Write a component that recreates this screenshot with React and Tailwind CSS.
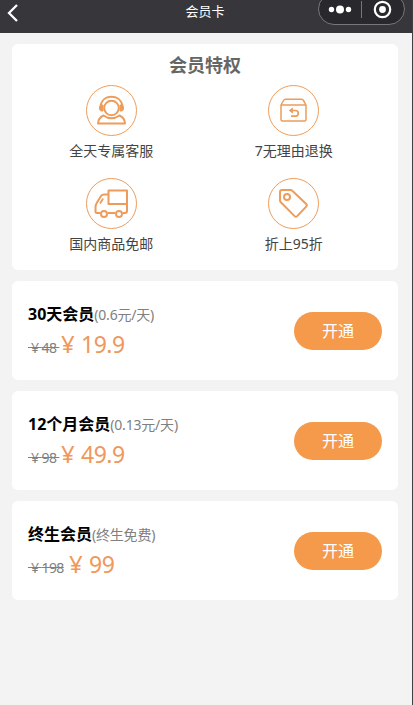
import React from 'react';

const plans = [
  { id: 1, name: '30天会员', note: '(0.6元/天)', oldPrice: '48 ', price: '19.9', oldWidth: 'w-8' },
  { id: 2, name: '12个月会员', note: '(0.13元/天)', oldPrice: '98 ', price: '49.9', oldWidth: 'w-8' },
  { id: 3, name: '终生会员', note: '(终生免费)', oldPrice: '198', price: '99', oldWidth: 'w-[36.5px]', gap: 'mr-[3.5px]' },
];

function ServiceIcon() {
  return (
    <>
      <circle cx="25.5" cy="23" r="7.3" strokeWidth="2" />
      <path d="M14.5 22C15 15.5 19.5 11.8 25.5 11.8s10.5 3.7 11 10.2" strokeWidth="2" />
      <path d="M17 20v6h-1.5c-1.5 0-2-1.3-2-3s.8-3 3.5-3zM34 20v6h1.5c1.5 0 2-1.3 2-3s-.8-3-3.5-3z" fill="currentColor" strokeWidth="1" />
      <path d="M17.5 30.5c-3.5 1.5-5.3 4.2-5.5 8h27c-.2-3.8-2-6.5-5.5-8-5 3.5-11 3.5-16 0z" strokeWidth="2" />
    </>
  );
}

function ReturnIcon() {
  return (
    <>
      <path d="M13 20h25v14.5a1.5 1.5 0 0 1-1.5 1.5h-22a1.5 1.5 0 0 1-1.5-1.5zM13 20l2.500-4.500q.7-1.200 2-1.200h16q1.300 0 2 1.200l2.500 4.500" strokeWidth="1.5" />
      <path d="M22.5 25.5h5a2.8 2.8 0 0 1 0 5.6h-4.5" strokeWidth="1.7" />
      <path d="M24.5 23l-3.2 2.5 3.2 2.5z" fill="currentColor" strokeWidth="0.8" />
    </>
  );
}

function TruckIcon() {
  return (
    <>
      <path d="M22.5 12.5h18.500v13.500h-18.500z" strokeWidth="2" />
      <path d="M22.5 16.5h-4.500q-2 0-3 1.500l-4 6.500q-1.500 2.500-1.500 4.500v4.500q0 1.500 1.500 1.500h3.500M21.5 35h8M36.5 35h2.500q2 0 2-2v-7" strokeWidth="2" />
      <path d="M17.2 20.5l-3.2 5" strokeWidth="1.8" />
      <circle cx="18" cy="36" r="3" strokeWidth="1.9" />
      <circle cx="33" cy="36" r="3" strokeWidth="1.9" />
    </>
  );
}

function TagIcon() {
  return (
    <>
      <path d="M14 12h8.5q1 0 1.8.7l13.900 13.300q1.300 1.300 0 2.600l-9 9.500q-1.300 1.300-2.600 0L12.8 24.3q-.8-.8-.8-1.8V14q0-2 2-2z" strokeWidth="2" />
      <circle cx="19" cy="19" r="3" strokeWidth="2" />
    </>
  );
}

const privileges = [
  { label: '全天专属客服', Icon: ServiceIcon },
  { label: '7无理由退换', Icon: ReturnIcon },
  { label: '国内商品免邮', Icon: TruckIcon },
  { label: '折上95折', Icon: TagIcon },
];

function Header() {
  return (
    <header className="flex h-[33px] items-start justify-between overflow-hidden bg-[#37363b] text-white">
      <div className="w-[94px]">
        <svg className="mt-1 ml-[7px] h-[18px] w-3" viewBox="0 0 12 18" fill="none" stroke="currentColor" strokeWidth="2.3">
          <path d="M10 1L2 9l8 8" />
        </svg>
      </div>
      <h1 className="mr-0.5 text-[13px] leading-[22px]">会员卡</h1>
      {/* mini program capsule */}
      <div className="-mt-[7px] mr-[7px] flex h-8 w-[87px] items-center rounded-full border border-[#77767a] bg-[#29282d]">
        <svg className="h-full w-full" viewBox="0 0 85 30" fill="currentColor">
          <circle cx="12.5" cy="15.5" r="2.7" />
          <circle cx="21" cy="15.5" r="4" />
          <circle cx="29.5" cy="15.5" r="2.7" />
          <path d="M42.5 7v17" stroke="#77767a" />
          <circle cx="63.5" cy="15.5" r="7.7" fill="none" stroke="currentColor" strokeWidth="2.2" />
          <circle cx="63.5" cy="15.5" r="3.4" />
        </svg>
      </div>
    </header>
  );
}

function PlanCard({ plan }) {
  return (
    <section className="flex h-[99px] items-center justify-between rounded-md bg-white px-4">
      <div className="-mt-0.5 whitespace-nowrap">
        <div className="flex h-[30px] items-baseline leading-[30px]">
          <span className="text-base font-bold text-black">{plan.name}</span>
          <span className="text-sm leading-[30px] tracking-[-0.2px] text-[#808080]">{plan.note}</span>
        </div>
        <div className="-mt-px flex h-[30px] items-baseline leading-[30px]">
          <span
            className={`text-sm leading-[30px] tracking-[-0.6px] whitespace-pre text-[#808080] line-through ${plan.oldWidth} ${plan.gap || ''}`}
          >
            {' ¥ '}
            {plan.oldPrice}
          </span>
          <span className="flex text-[23px] leading-[30px] tracking-[-0.5px] text-[#f0975a]">
            <span className="w-[21px] shrink-0 pl-px text-2xl leading-[30px]">¥</span>
            <span>{plan.price}</span>
          </span>
        </div>
      </div>
      <button className="h-[38px] w-[88px] rounded-full bg-[#f5994a] text-base text-white">开通</button>
    </section>
  );
}

export default function App() {
  return (
    <div className="h-[705px] w-[413px] border-r border-[#414045] bg-[#f3f3f3] font-['Noto_Sans','Noto_Sans_CJK_SC',sans-serif]">
      <Header />
      <main className="flex flex-col gap-[11px] pt-[11px] pr-3.5 pl-3">
        <section className="h-[226px] rounded-md bg-white pt-2">
          <h2 className="text-center text-lg leading-[26px] font-bold text-[#666]">会员特权</h2>
          <div className="mt-[7px] grid grid-cols-2 gap-y-[18px] pr-[13px] pl-2">
            {privileges.map(({ label, Icon }) => (
              <div key={label} className="flex h-[75px] flex-col items-center">
                <svg
                  className="h-[51px] w-[51px] shrink-0 text-[#ed9c5b]"
                  viewBox="0 0 51 51"
                  fill="none"
                  stroke="currentColor"
                  strokeLinejoin="round"
                >
                  <circle cx="25.5" cy="25.5" r="25" />
                  <Icon />
                </svg>
                <span className="mt-[5px] text-sm text-[#444]">{label}</span>
              </div>
            ))}
          </div>
        </section>
        {plans.map((plan) => (
          <PlanCard key={plan.id} plan={plan} />
        ))}
      </main>
    </div>
  );
}
